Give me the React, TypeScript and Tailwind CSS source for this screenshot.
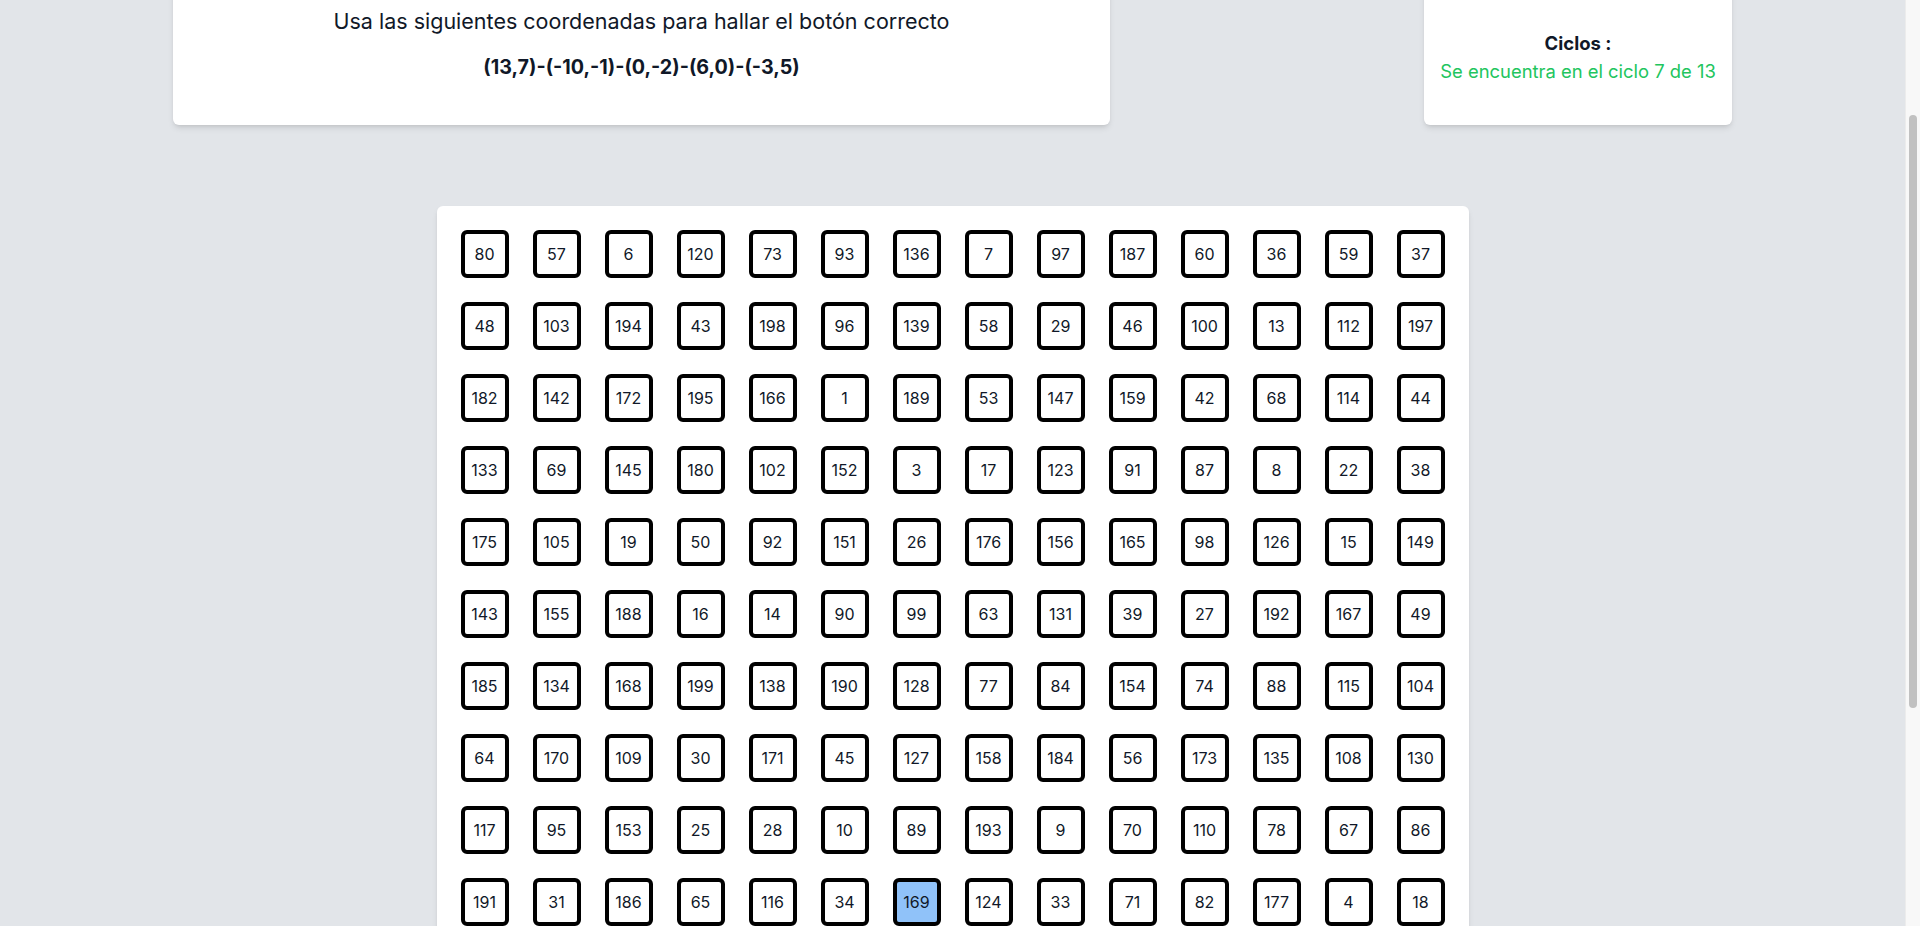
import { useEffect } from "react";

const visibleRows = [
  [80, 57, 6, 120, 73, 93, 136, 7, 97, 187, 60, 36, 59, 37],
  [48, 103, 194, 43, 198, 96, 139, 58, 29, 46, 100, 13, 112, 197],
  [182, 142, 172, 195, 166, 1, 189, 53, 147, 159, 42, 68, 114, 44],
  [133, 69, 145, 180, 102, 152, 3, 17, 123, 91, 87, 8, 22, 38],
  [175, 105, 19, 50, 92, 151, 26, 176, 156, 165, 98, 126, 15, 149],
  [143, 155, 188, 16, 14, 90, 99, 63, 131, 39, 27, 192, 167, 49],
  [185, 134, 168, 199, 138, 190, 128, 77, 84, 154, 74, 88, 115, 104],
  [64, 170, 109, 30, 171, 45, 127, 158, 184, 56, 173, 135, 108, 130],
  [117, 95, 153, 25, 28, 10, 89, 193, 9, 70, 110, 78, 67, 86],
  [191, 31, 186, 65, 116, 34, 169, 124, 33, 71, 82, 177, 4, 18],
];

// the rest of the board (below the fold) is filled with the unused numbers
const used = new Set(visibleRows.flat());
const leftovers: number[] = [];
for (let n = 200; n >= 1 && leftovers.length < 56; n--) {
  if (!used.has(n)) leftovers.push(n);
}
const cells = [...visibleRows.flat(), ...leftovers];

const SELECTED = 169;

export default function App() {
  useEffect(() => {
    window.scrollTo(0, 180);
  }, []);

  return (
    <div
      className="min-h-screen bg-[#e2e5e9] pb-[28px] pr-[15px] pt-[140px] text-gray-900"
      style={{ fontFamily: "Inter, 'Noto Sans', sans-serif" }}
    >
      <div className="mx-auto flex w-[1559px] items-stretch justify-between">
        <div className="flex w-[937px] flex-col items-center rounded-md bg-white pb-[44px] pt-[47px] shadow-md">
          <p className="text-[21.5px] leading-7">Usa las siguientes coordenadas para hallar el botón correcto</p>
          <p className="mt-[18px] text-[19.7px] font-bold leading-7">(13,7)-(-10,-1)-(0,-2)-(6,0)-(-3,5)</p>
        </div>
        <div className="flex w-[308px] flex-col items-center rounded-md bg-white pt-[69px] shadow-md">
          <p className="text-[18.5px] font-bold leading-7">Ciclos :</p>
          <p className="text-[18.4px] leading-7 text-[#22c55e]">Se encuentra en el ciclo 7 de 13</p>
        </div>
      </div>

      <div className="mx-auto mt-[81px] w-[1032px] rounded-md bg-white p-6 shadow-md">
        <div className="grid grid-cols-14 gap-6">
          {cells.map((n) => (
            <button
              key={n}
              className={`flex h-12 w-12 items-center justify-center rounded-md border-4 border-black text-base text-gray-900 ${
                n === SELECTED ? "bg-[#90c2f9]" : "bg-white"
              }`}
            >
              {n}
            </button>
          ))}
        </div>
      </div>

      {/* classic browser scrollbar */}
      <div className="fixed right-0 top-0 h-full w-[15px] border-l border-[#ececec] bg-[#f8f8f8]">
        <div className="ml-[3px] mt-[115px] h-[593px] w-[8px] rounded-full bg-[#c1c1c1]" />
      </div>
    </div>
  );
}
